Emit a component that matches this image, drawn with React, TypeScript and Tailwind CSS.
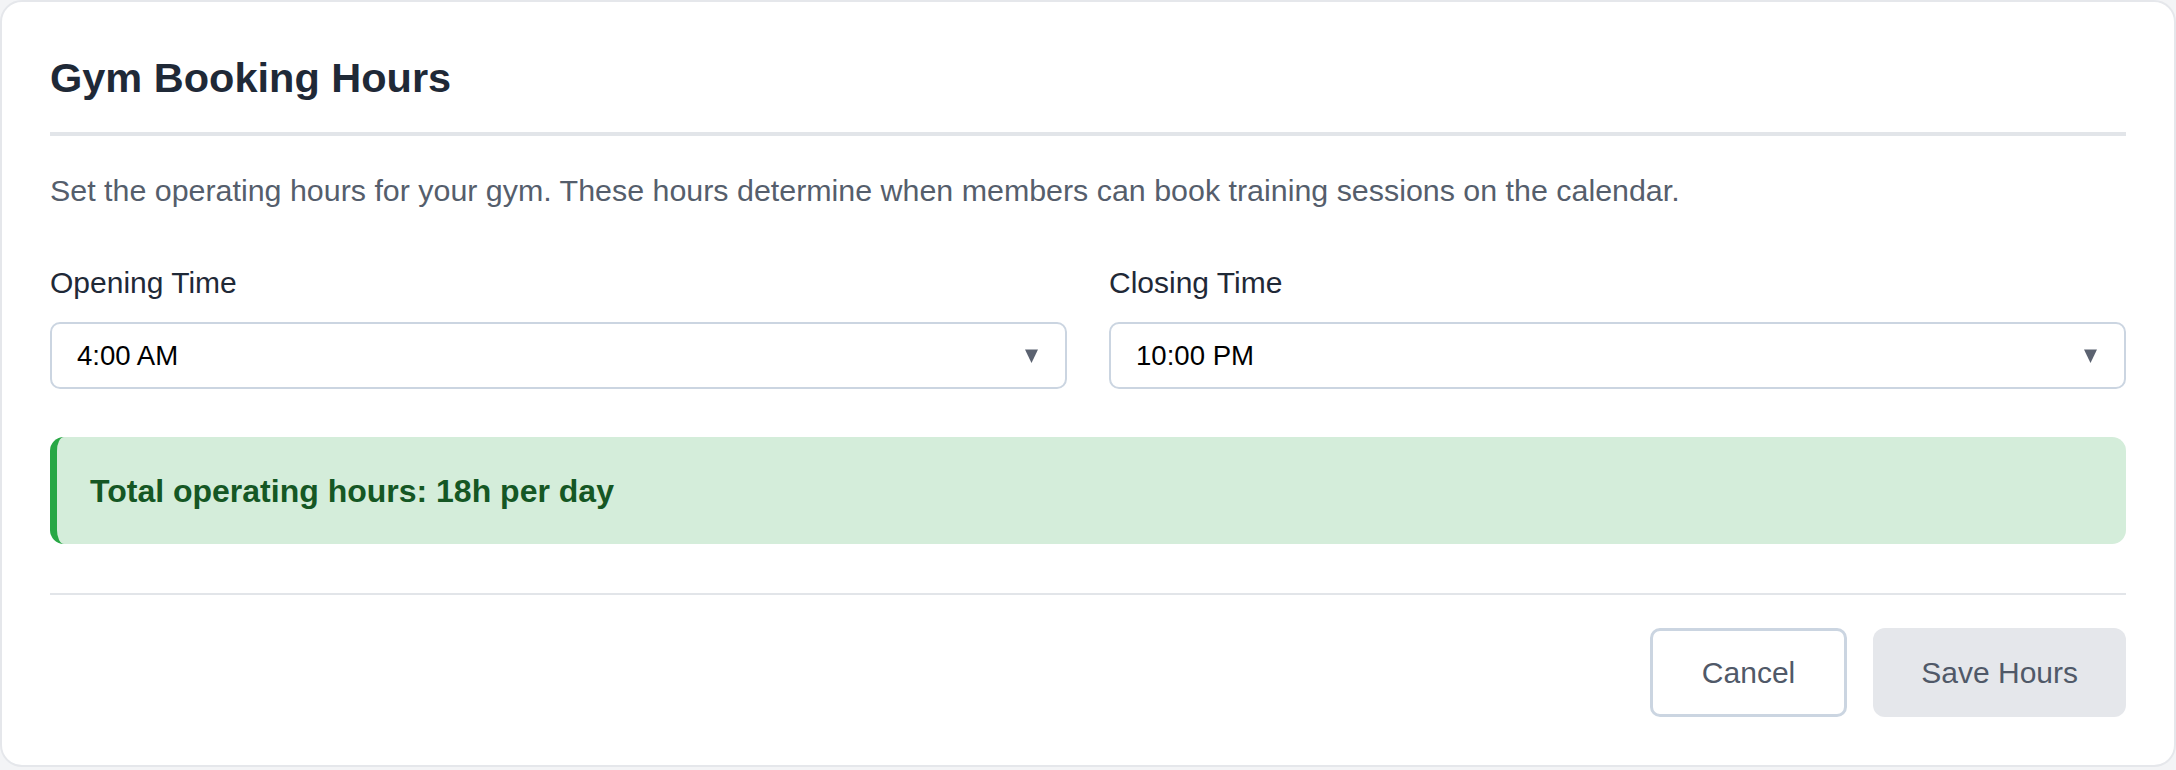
import React from "react";

function Caret() {
  return (
    <svg width="13" height="14" viewBox="0 0 13 14" className="shrink-0">
      <polygon points="0,0.5 13,0.5 6.5,14" fill="#5b6270" />
    </svg>
  );
}

function TimeSelect({ label, value }: { label: string; value: string }) {
  return (
    <div className="flex flex-col">
      <label className="text-[30px] leading-[44px] text-[#1f2937]">{label}</label>
      <div className="mt-[17px] flex h-[67px] items-center justify-between rounded-[10px] border-2 border-[#cbd5e1] bg-white pl-[25px] pr-[27px]">
        <span className="text-[27.6px] leading-none text-black">{value}</span>
        <Caret />
      </div>
    </div>
  );
}

export default function App() {
  return (
    <div
      className="min-h-[770px] w-full bg-[#f3f4f6]"
      style={{ fontFamily: '"Liberation Sans", Arial, Helvetica, sans-serif' }}
    >
      <div className="w-full rounded-[22px] border-2 border-[#e5e7eb] bg-white px-[48px] pt-[48px] pb-[48px]">
        <div className="border-b-[4px] border-[#e2e5e9] pb-[26px]">
          <h1 className="text-[41.5px] font-bold leading-[56px] text-[#1f2937]">Gym Booking Hours</h1>
        </div>

        <p className="mt-[32px] text-[30.4px] leading-[45px] text-[#555e6c]">
          Set the operating hours for your gym. These hours determine when members can book training sessions on the calendar.
        </p>

        <div className="mt-[48px] grid grid-cols-2 gap-[42px]">
          <TimeSelect label="Opening Time" value="4:00 AM" />
          <TimeSelect label="Closing Time" value="10:00 PM" />
        </div>

        <div className="mt-[48px] flex h-[107px] items-center rounded-[14px] border-l-[7px] border-[#28a745] bg-[#d4edda] pl-[33px]">
          <span className="text-[32px] font-bold leading-none text-[#155724]">
            Total operating hours: 18h per day
          </span>
        </div>

        <div className="mt-[49px] flex justify-end gap-[26px] border-t-2 border-[#e2e5e9] pt-[33px]">
          <button className="h-[89px] rounded-[10px] border-[3px] border-[#cbd5e1] bg-white px-[49px] text-[30px] text-[#505968]">
            Cancel
          </button>
          <button className="h-[89px] rounded-[12px] bg-[#e5e7eb] px-[48px] text-[30px] text-[#505968]">
            Save Hours
          </button>
        </div>
      </div>
    </div>
  );
}
